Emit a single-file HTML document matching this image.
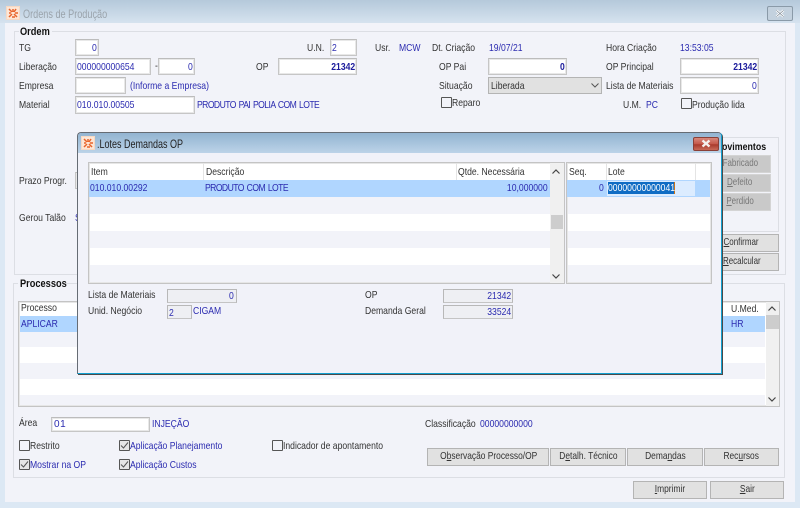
<!DOCTYPE html>
<html><head><meta charset="utf-8"><style>
html,body{margin:0;padding:0;background:#dfe9f4}
#r{position:relative;width:800px;height:508px;overflow:hidden;background:#dce8f4;font-family:"Liberation Sans",sans-serif;filter:blur(.35px)}
#r div,#r svg{position:absolute;box-sizing:border-box}
.t{white-space:nowrap;font-size:10.5px;line-height:12px;color:#333;transform:scaleX(.82);transform-origin:0 50%}
.b{color:#2b2bb0}
.c{letter-spacing:-.7px;word-spacing:1.2px}
.e{transform-origin:100% 50%;text-align:right}
.h{font-weight:bold;color:#111;font-size:11px;transform:scaleX(.84)}
.f{background:#fff;border:1px solid #c6c6c6;border-top-color:#bcbcbc;box-shadow:inset 0 0 0 1px #e8e8e8}
.g{background:#eeeff3;border:1px solid #b8b8b8;border-bottom-color:#c4c4c4}
.gb{border:1px solid #dcdee4}
.btn{background:#e1e1e1;border:1px solid #b4b4b4;font-size:10.5px;color:#333;text-align:center;line-height:15px;white-space:nowrap}
.btn span{display:inline-block;transform:scaleX(.8)}
.dis{background:#c9c9c9;border-color:#d4d4d4;color:#777}
.cb{width:11px;height:11px;border:1px solid #555;background:#f2f3f9;border-radius:1px}
.ck{background:#e6e6e6}
.m span{transform:scaleX(.76)}
.grid{background:#fff;border:1px solid #c4c4c4;box-shadow:inset 0 0 0 1px #e6e6e6}
</style></head><body><div id="r">
<!-- outer window -->
<div style="left:0;top:0;width:800px;height:23px;background:linear-gradient(#b5c9db,#d6e3ef)"></div>
<div style="left:5px;top:23px;width:790px;height:479px;background:#f2f3f9"></div>
<div style="left:7px;top:7px;width:12px;height:12px;background:#fde6d6;box-shadow:0 0 0 1px #f6d9c4"></div>
<svg style="left:8px;top:8px" width="11" height="11" viewBox="0 0 11 11"><path d="M1 1l3 3M8 1L6 4M1 9l3-3M9 9L6 6M5 1v3M1 5h2M7 5h3M4 9h3" stroke="#e8642a" stroke-width="1.5" fill="none"/></svg>
<div class="t" style="left:23px;top:8px;color:#9aa3ab;font-size:12px;transform:scaleX(.76)">Ordens de Produção</div>
<div style="left:767px;top:6px;width:26px;height:15px;border:1px solid #8a9aa8;border-radius:2px;background:#c3d1de"></div>
<svg style="left:775px;top:9px" width="10" height="9" viewBox="0 0 10 9"><path d="M1.5 1.5l7 6M8.5 1.5l-7 6" stroke="#fff" stroke-width="2.4"/><path d="M1.5 1.5l7 6M8.5 1.5l-7 6" stroke="#7c8894" stroke-width=".8"/></svg>

<!-- Ordem group -->
<div class="gb" style="left:14px;top:31px;width:772px;height:244px"></div>
<div style="left:19px;top:28px;width:33px;height:8px;background:#f2f3f9"></div>
<div class="t h" style="left:20px;top:26px">Ordem</div>
<div class="t" style="left:19px;top:42px">TG</div>
<div class="f" style="left:75px;top:39px;width:24px;height:17px"></div>
<div class="t b e" style="right:703px;top:42px">0</div>
<div class="t" style="left:307px;top:42px">U.N.</div>
<div class="f" style="left:330px;top:39px;width:27px;height:17px"></div>
<div class="t b" style="left:332px;top:42px">2</div>
<div class="t" style="left:375px;top:42px">Usr.</div>
<div class="t b" style="left:399px;top:42px">MCW</div>
<div class="t" style="left:432px;top:42px">Dt. Criação</div>
<div class="t b" style="left:489px;top:42px">19/07/21</div>
<div class="t" style="left:606px;top:42px">Hora Criação</div>
<div class="t b" style="left:680px;top:42px">13:53:05</div>

<div class="t" style="left:19px;top:61px">Liberação</div>
<div class="f" style="left:75px;top:58px;width:76px;height:17px"></div>
<div class="t b" style="left:77px;top:61px">000000000654</div>
<div class="t" style="left:155px;top:60px">-</div>
<div class="f" style="left:158px;top:58px;width:37px;height:17px"></div>
<div class="t b e" style="right:607px;top:61px">0</div>
<div class="t" style="left:256px;top:61px">OP</div>
<div class="f" style="left:278px;top:58px;width:79px;height:17px"></div>
<div class="t b e" style="right:445px;top:61px;font-weight:bold;color:#1c1c9c">21342</div>
<div class="t" style="left:439px;top:61px">OP Pai</div>
<div class="f" style="left:488px;top:58px;width:79px;height:17px"></div>
<div class="t b e" style="right:235px;top:61px;font-weight:bold;color:#1c1c9c">0</div>
<div class="t" style="left:606px;top:61px">OP Principal</div>
<div class="f" style="left:680px;top:58px;width:79px;height:17px"></div>
<div class="t b e" style="right:43px;top:61px;font-weight:bold;color:#1c1c9c">21342</div>

<div class="t" style="left:19px;top:80px">Empresa</div>
<div class="f" style="left:75px;top:77px;width:51px;height:17px"></div>
<div class="t b" style="left:130px;top:80px">(Informe a Empresa)</div>
<div class="t" style="left:439px;top:80px">Situação</div>
<div style="left:488px;top:77px;width:114px;height:17px;background:#e1e1e1;border:1px solid #b4b4b4"></div>
<div class="t" style="left:491px;top:80px">Liberada</div>
<svg style="left:591px;top:83px" width="8" height="5" viewBox="0 0 8 5"><path d="M.5.5L4 4 7.5.5" stroke="#555" fill="none"/></svg>
<div class="t" style="left:606px;top:80px">Lista de Materiais</div>
<div class="f" style="left:680px;top:77px;width:79px;height:17px"></div>
<div class="t b e" style="right:43px;top:80px">0</div>

<div class="t" style="left:19px;top:99px">Material</div>
<div class="f" style="left:75px;top:96px;width:120px;height:18px"></div>
<div class="t b" style="left:77px;top:99px">010.010.00505</div>
<div class="t b c" style="left:197px;top:99px">PRODUTO PAI POLIA COM LOTE</div>
<div class="cb" style="left:441px;top:97px"></div>
<div class="t" style="left:452px;top:97px">Reparo</div>
<div class="t" style="left:623px;top:99px">U.M.</div>
<div class="t b" style="left:646px;top:99px">PC</div>
<div class="cb" style="left:681px;top:98px"></div>
<div class="t" style="left:692px;top:99px">Produção lida</div>

<div class="t" style="left:19px;top:175px">Prazo Progr.</div>
<div class="t" style="left:19px;top:212px">Gerou Talão</div>
<div class="t b" style="left:75px;top:212px">S</div>
<div class="f" style="left:75px;top:172px;width:10px;height:17px"></div>

<!-- Movimentos -->
<div class="gb" style="left:700px;top:137px;width:79px;height:95px"></div>
<div class="t h" style="left:722px;top:141px;font-size:10.5px">ovimentos</div>
<div class="btn dis m" style="left:700px;top:155px;width:71px;height:18px"><span style="margin-left:9px">Fabricado</span></div>
<div class="btn dis m" style="left:700px;top:174px;width:71px;height:18px"><span style="margin-left:9px"><u>D</u>efeito</span></div>
<div class="btn dis m" style="left:700px;top:193px;width:71px;height:18px"><span style="margin-left:9px"><u>P</u>erdido</span></div>
<div class="btn m" style="left:700px;top:234px;width:79px;height:18px"><span style="margin-left:3px"><u>C</u>onfirmar</span></div>
<div class="btn m" style="left:700px;top:253px;width:79px;height:18px"><span style="margin-left:4px"><u>R</u>ecalcular</span></div>

<!-- Processos group -->
<div class="gb" style="left:13px;top:283px;width:772px;height:195px"></div>
<div style="left:18px;top:279px;width:48px;height:8px;background:#f2f3f9"></div>
<div class="t h" style="left:20px;top:278px">Processos</div>
<div class="grid" style="left:18px;top:301px;width:762px;height:106px"></div>
<div class="t" style="left:21px;top:302px">Processo</div>
<div class="t" style="left:731px;top:303px">U.Med.</div>
<div style="left:20px;top:316px;width:745px;height:16px;background:#b0d6ff"></div>
<div class="t b" style="left:21px;top:318px">APLICAR</div>
<div class="t b" style="left:731px;top:318px">HR</div>
<div style="left:20px;top:332px;width:745px;height:15px;background:#f2f3f9"></div>
<div style="left:20px;top:363px;width:745px;height:16px;background:#f2f3f9"></div>
<div style="left:20px;top:395px;width:745px;height:10px;background:#f2f3f9"></div>
<div style="left:766px;top:302px;width:13px;height:104px;background:#f0f0f0"></div>
<div style="left:766px;top:315px;width:13px;height:14px;background:#cdcdcd"></div>
<svg style="left:768px;top:306px" width="8" height="5" viewBox="0 0 8 5"><path d="M.5 4.500L4 1l3.500 3.500" stroke="#444" stroke-width="1.200" fill="none"/></svg>
<svg style="left:768px;top:397px" width="8" height="5" viewBox="0 0 8 5"><path d="M.5.5L4 4 7.500.5" stroke="#444" stroke-width="1.200" fill="none"/></svg>

<div class="t" style="left:19px;top:417px">Área</div>
<div class="f" style="left:51px;top:417px;width:99px;height:15px"></div>
<div class="t b" style="left:54px;top:419px;font-size:10px;letter-spacing:.6px;transform:none">01</div>
<div class="t b" style="left:152px;top:418px">INJEÇÃO</div>
<div class="t" style="left:425px;top:418px">Classificação</div>
<div class="t b" style="left:480px;top:418px">00000000000</div>

<div class="cb" style="left:19px;top:440px"></div>
<div class="t" style="left:30px;top:440px">Restrito</div>
<div class="cb ck" style="left:119px;top:440px"></div>
<svg style="left:120px;top:441px" width="9" height="9" viewBox="0 0 9 9"><path d="M1 4.500l2.500 2.500L8 1.500" stroke="#555" fill="none"/></svg>
<div class="t b" style="left:130px;top:440px">Aplicação Planejamento</div>
<div class="cb" style="left:272px;top:440px"></div>
<div class="t" style="left:283px;top:440px">Indicador de apontamento</div>
<div class="cb ck" style="left:19px;top:459px"></div>
<svg style="left:20px;top:460px" width="9" height="9" viewBox="0 0 9 9"><path d="M1 4.500l2.500 2.500L8 1.500" stroke="#555" fill="none"/></svg>
<div class="t b" style="left:30px;top:459px">Mostrar na OP</div>
<div class="cb ck" style="left:119px;top:459px"></div>
<svg style="left:120px;top:460px" width="9" height="9" viewBox="0 0 9 9"><path d="M1 4.500l2.500 2.500L8 1.500" stroke="#555" fill="none"/></svg>
<div class="t b" style="left:130px;top:459px">Aplicação Custos</div>

<div class="btn" style="left:427px;top:448px;width:122px;height:18px"><span>O<u>b</u>servação Processo/OP</span></div>
<div class="btn" style="left:550px;top:448px;width:76px;height:18px"><span>D<u>e</u>talh. Técnico</span></div>
<div class="btn" style="left:627px;top:448px;width:76px;height:18px"><span>Dema<u>n</u>das</span></div>
<div class="btn" style="left:704px;top:448px;width:75px;height:18px"><span>Rec<u>u</u>rsos</span></div>
<div class="btn" style="left:633px;top:481px;width:74px;height:18px"><span><u>I</u>mprimir</span></div>
<div class="btn" style="left:710px;top:481px;width:74px;height:18px"><span><u>S</u>air</span></div>

<!-- Modal -->
<div style="left:77px;top:132px;width:645px;height:242px;background:#f1f2f9;border:1px solid #666c74;border-right:1px solid #12a0d0;border-bottom:1px solid #12a0d0;border-radius:4px 4px 0 0;box-shadow:1px 1px 0 #4a4a4a"></div>
<div style="left:78px;top:133px;width:643px;height:20px;background:linear-gradient(#93b4d1,#bcd3e8);border-radius:3px 3px 0 0"></div>
<div style="left:82px;top:137px;width:12px;height:12px;background:#fde6d6;box-shadow:0 0 0 1px #f6d9c4"></div>
<svg style="left:83px;top:138px" width="11" height="11" viewBox="0 0 11 11"><path d="M1 1l3 3M8 1L6 4M1 9l3-3M9 9L6 6M5 1v3M1 5h2M7 5h3M4 9h3" stroke="#e8642a" stroke-width="1.5" fill="none"/></svg>
<div class="t" style="left:97px;top:138px;font-size:12px;color:#222;transform:scaleX(.75)">.Lotes Demandas OP</div>
<div style="left:693px;top:137px;width:26px;height:14px;border-radius:2px;border:1px solid #8a4038;background:linear-gradient(#d8887c 0,#c4584a 50%,#a83a2c 55%,#c86a58)"></div>
<svg style="left:701px;top:139px" width="10" height="9" viewBox="0 0 10 9"><path d="M1.5 1.5l7 6M8.5 1.5l-7 6" stroke="#f4f0ee" stroke-width="2.4"/></svg>

<!-- grid 1 -->
<div class="grid" style="left:88px;top:162px;width:477px;height:122px"></div>
<div style="left:89px;top:180px;width:461px;height:17px;background:#b0d6ff"></div>
<div style="left:90px;top:197px;width:460px;height:17px;background:#f2f3f9"></div>
<div style="left:90px;top:231px;width:460px;height:17px;background:#f2f3f9"></div>
<div style="left:90px;top:265px;width:460px;height:17px;background:#f2f3f9"></div>
<div style="left:203px;top:163px;width:1px;height:17px;background:#e4e4e4"></div>
<div style="left:456px;top:163px;width:1px;height:17px;background:#e4e4e4"></div>
<div class="t" style="left:91px;top:166px">Item</div>
<div class="t" style="left:206px;top:166px">Descrição</div>
<div class="t" style="left:458px;top:166px">Qtde. Necessária</div>
<div class="t b" style="left:90px;top:182px">010.010.00292</div>
<div class="t b c" style="left:205px;top:182px">PRODUTO COM LOTE</div>
<div class="t b e" style="right:252px;top:182px">10,000000</div>
<div style="left:550px;top:163px;width:14px;height:120px;background:#f0f0f0"></div>
<div style="left:551px;top:215px;width:12px;height:14px;background:#cdcdcd"></div>
<svg style="left:552px;top:169px" width="8" height="5" viewBox="0 0 8 5"><path d="M.5 4.500L4 1l3.500 3.500" stroke="#444" stroke-width="1.200" fill="none"/></svg>
<svg style="left:552px;top:274px" width="8" height="5" viewBox="0 0 8 5"><path d="M.5.5L4 4 7.5.5" stroke="#444" stroke-width="1.200" fill="none"/></svg>

<!-- grid 2 -->
<div class="grid" style="left:566px;top:162px;width:146px;height:122px"></div>
<div style="left:567px;top:180px;width:143px;height:17px;background:#b0d6ff"></div>
<div style="left:568px;top:197px;width:142px;height:17px;background:#f2f3f9"></div>
<div style="left:568px;top:231px;width:142px;height:17px;background:#f2f3f9"></div>
<div style="left:568px;top:265px;width:142px;height:17px;background:#f2f3f9"></div>
<div style="left:606px;top:163px;width:1px;height:17px;background:#e4e4e4"></div>
<div style="left:695px;top:163px;width:1px;height:17px;background:#e4e4e4"></div>
<div class="t" style="left:569px;top:166px">Seq.</div>
<div class="t" style="left:608px;top:166px">Lote</div>
<div class="t b e" style="right:196px;top:182px">0</div>
<div style="left:607px;top:181px;width:88px;height:15px;background:#dcecff"></div>
<div style="left:608px;top:182px;width:67px;height:12px;background:#0f6cc4;border-right:1px solid #c8741c"></div>
<div class="t" style="left:608px;top:182px;color:#fff">00000000000041</div>

<!-- bottom of modal -->
<div class="t" style="left:88px;top:289px">Lista de Materiais</div>
<div class="g" style="left:167px;top:289px;width:70px;height:14px"></div>
<div class="t b e" style="right:566px;top:290px">0</div>
<div class="t" style="left:88px;top:305px">Unid. Negócio</div>
<div class="g" style="left:167px;top:305px;width:25px;height:14px"></div>
<div class="t b" style="left:169px;top:307px">2</div>
<div class="t b" style="left:193px;top:305px">CIGAM</div>
<div class="t" style="left:365px;top:289px">OP</div>
<div class="g" style="left:443px;top:289px;width:70px;height:14px"></div>
<div class="t b e" style="right:289px;top:290px">21342</div>
<div class="t" style="left:365px;top:305px">Demanda Geral</div>
<div class="g" style="left:443px;top:305px;width:70px;height:14px"></div>
<div class="t b e" style="right:289px;top:306px">33524</div>
</div></body></html>
